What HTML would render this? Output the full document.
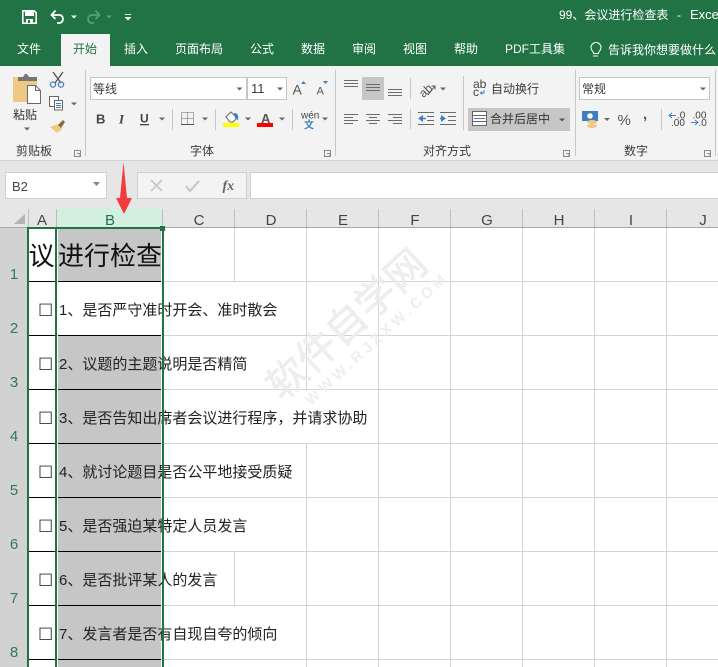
<!DOCTYPE html>
<html lang="zh"><head><meta charset="utf-8"><title>Excel</title>
<style>
html,body{margin:0;padding:0;background:#fff;width:718px;height:667px;overflow:hidden}
svg{display:block}
text{font-family:"Liberation Sans","Noto Sans CJK SC",sans-serif}
.t{font-size:12px;fill:#fff}
.r{font-size:12px;fill:#3a3a3a}
.c{font-size:15px;fill:#222}
.b{font-size:17px;fill:#333}
.ch{font-size:15px;fill:#444;text-anchor:middle}
.rn{font-size:15px;fill:#2f7a55;text-anchor:middle}
.a{fill:#666}
.l{stroke:#6a6a6a;stroke-width:1;fill:none}
.g{stroke:#d4d4d4;stroke-width:1;fill:none}
.s{stroke:#c8c8c8;stroke-width:1;fill:none}
</style></head><body>
<svg width="718" height="667" viewBox="0 0 718 667" xmlns="http://www.w3.org/2000/svg">
<!-- chrome backgrounds -->
<rect width="718" height="66" fill="#217346"/>
<rect x="0" y="66" width="718" height="94" fill="#f3f3f3"/>
<rect x="0" y="160" width="718" height="48" fill="#e6e6e6"/>
<rect x="0" y="160" width="718" height="1" fill="#d2d2d2"/>
<rect x="61" y="34" width="49" height="32" fill="#f3f3f3"/>

<!-- quick access -->
<path d="M22.800 10.800h11.400l2 2v10.400h-13.400z" fill="none" stroke="#fff" stroke-width="1.600"/>
<rect x="25" y="11" width="9" height="5" fill="#fff"/>
<rect x="26" y="19" width="7" height="5" fill="#fff"/><rect x="28" y="20" width="2" height="3" fill="#217346"/>
<path d="M52 15h8a4.200 4.200 0 0 1 0 8h-3M55.500 10.500l-4 4.500 4 4" fill="none" stroke="#fff" stroke-width="1.800"/>
<path d="M71 15.500h6l-3 3z" fill="#fff"/>
<path d="M99 15h-8a4.200 4.200 0 0 0 0 8h3M95.500 10.500l4 4.500-4 4" fill="none" stroke="#5d9a7b" stroke-width="1.800"/>
<path d="M106 15.500h6l-3 3z" fill="#5d9a7b"/>
<rect x="125" y="14" width="6" height="1" fill="#fff"/><path d="M124.500 17h7l-3.500 3.500z" fill="#fff"/>

<text class="t" x="559" y="19">99、会议进行检查表</text>
<text class="t" x="677" y="19">-</text>
<text class="t" x="690" y="19" style="font-size:13px">Excel</text>

<!-- tabs -->
<text class="t" x="17" y="53">文件</text>
<text class="t" x="73" y="53" style="fill:#217346">开始</text>
<text class="t" x="124" y="53">插入</text>
<text class="t" x="175" y="53">页面布局</text>
<text class="t" x="250" y="53">公式</text>
<text class="t" x="301" y="53">数据</text>
<text class="t" x="352" y="53">审阅</text>
<text class="t" x="403" y="53">视图</text>
<text class="t" x="454" y="53">帮助</text>
<text class="t" x="505" y="53">PDF工具集</text>
<path d="M593 56h5M593.500 53.500c0-2-2.500-3-2.500-6a5 5 0 0 1 10 0c0 3-2.500 4-2.500 6z" fill="none" stroke="#fff" stroke-width="1"/>
<text class="t" x="608" y="54">告诉我你想要做什么</text>

<!-- ribbon separators -->
<path class="s" d="M85.500 70v86M335.500 70v86M575.500 70v86M715.500 70v86"/>

<!-- clipboard -->
<path d="M13 77h24v25H13z" fill="#efc983"/>
<path d="M18 77h5l2-3h2l2 3h8v4H18z" fill="#757575"/>
<path d="M27.500 85.500h8l5 5v13h-13z" fill="#fff" stroke="#6a6a6a"/>
<path d="M35.500 85.500v5h5" fill="none" stroke="#6a6a6a"/>
<text class="r" x="13" y="119" style="fill:#333">粘贴</text>
<path class="a" d="M24 127.500h6l-3 3z"/>
<path d="M53 72l8 11M63 72l-8 11" stroke="#555" stroke-width="1.300" fill="none"/>
<circle cx="53" cy="84.500" r="2.600" fill="none" stroke="#3f7fbf" stroke-width="1.300"/>
<circle cx="61" cy="84.500" r="2.600" fill="none" stroke="#3f7fbf" stroke-width="1.300"/>
<path d="M49.500 96.500h9v10h-9z" fill="#fff" stroke="#666"/>
<path d="M54.500 100.500h8v9.500h-8z" fill="#fff" stroke="#666"/>
<path d="M56 103.500h5M56 105.500h5M56 107.500h5" stroke="#3f7fbf"/>
<path class="a" d="M71 102.500h6l-3 3z"/>
<path d="M50 127l8-3 4 5-5 4z" fill="#efc983"/><path d="M58 125l5-5 2 2-4 6z" fill="#8a6a3a"/>
<text class="r" x="16" y="155">剪贴板</text>
<path d="M74.500 150.500v6h6v-6zM77 153.500h3v3" fill="none" stroke="#8a8a8a"/>

<!-- font -->
<rect x="90.500" y="77.500" width="156" height="22" fill="#fff" stroke="#c6c6c6"/>
<rect x="247.500" y="77.500" width="39" height="22" fill="#fff" stroke="#c6c6c6"/>
<text class="r" x="93" y="93">等线</text>
<text class="r" x="251" y="93" style="font-size:13px">11</text>
<path class="a" d="M236.500 87.500h6l-3 3zM277 87.500h6l-3 3z"/>
<text x="292.500" y="94.500" style="font-size:14px;fill:#555">A</text>
<path d="M301 84l2.500-3 2.500 3z" fill="#3f7fbf"/>
<text x="316.500" y="94.500" style="font-size:11px;fill:#555">A</text>
<path d="M323 81h5l-2.500 3z" fill="#3f7fbf"/>
<text x="96" y="123.500" style="font-size:13px;font-weight:bold;fill:#444">B</text>
<text x="119" y="123.500" style="font-size:13px;font-style:italic;font-weight:bold;font-family:'Liberation Serif',serif;fill:#444">I</text>
<text x="140" y="122.500" style="font-size:12px;font-weight:bold;fill:#444">U</text>
<rect x="140" y="124" width="9" height="1.300" fill="#444"/>
<path class="a" d="M159 117.500h6l-3 3z"/>
<path class="s" d="M172.500 109v21"/>
<path d="M181.500 112.500h12v12h-12zM187.500 112.500v12M181.500 118.500h12" fill="none" stroke="#666" stroke-dasharray="1 1"/>
<path d="M181 124.500h13" stroke="#555"/>
<path class="a" d="M202 117.500h6l-3 3z"/>
<path class="s" d="M215.500 109v21"/>
<path d="M226 117l5-5 6 6-4 4h-3z" fill="#fff" stroke="#666"/>
<path d="M234 113c3 0 5 2 4 7l-3-2z" fill="#3f7fbf"/>
<rect x="223" y="123" width="16" height="4" fill="#ffff00"/>
<path class="a" d="M245 117.500h6l-3 3z"/>
<text x="261" y="123" style="font-size:13px;font-weight:bold;fill:#555">A</text>
<rect x="257" y="123" width="16" height="4" fill="#ff0000"/>
<path class="a" d="M279 117.500h6l-3 3z"/>
<path class="s" d="M292.500 109v21"/>
<text x="301" y="118.500" style="font-size:10px;fill:#444">wén</text>
<text x="304" y="128.500" style="font-size:10px;font-weight:bold;fill:#3f7fbf">文</text>
<path class="a" d="M322 117.500h6l-3 3z"/>
<text class="r" x="190" y="155">字体</text>
<path d="M324.500 150.500v6h6v-6zM327 153.500h3v3" fill="none" stroke="#8a8a8a"/>

<!-- alignment -->
<rect x="362" y="77" width="22" height="23" fill="#c6c6c6"/>
<path class="l" d="M344 80.500h14M344 83.500h14M344 86.500h14"/>
<path class="l" d="M366 84.500h14M366 87.500h14M366 90.500h14"/>
<path class="l" d="M388 89.500h14M388 92.500h14M388 95.500h14"/>
<path class="l" d="M344 114.500h14M344 117.500h9M344 120.500h14M344 123.500h9"/>
<path class="l" d="M366 114.500h14M369 117.500h8M366 120.500h14M369 123.500h8"/>
<path class="l" d="M388 114.500h14M393 117.500h9M388 120.500h14M393 123.500h9"/>
<path class="s" d="M410.500 78v21M410.500 109v20"/>
<text x="418" y="94" transform="rotate(-42 426 89)" style="font-size:12px;fill:#555">ab</text>
<path d="M428 95l7-9M431.500 86h3.500v3.500" stroke="#555" fill="none"/>
<path class="a" d="M440 87.500h6l-3 3z"/>
<path d="M418 118.500l5-3.500v7z" fill="#3f7fbf"/><path d="M421 118.500h5" stroke="#3f7fbf" stroke-width="1.500"/>
<path class="l" d="M418 112.500h16M427 116.500h7M427 120.500h7M418 124.500h16"/>
<path d="M446 118.500l-5-3.500v7z" fill="#3f7fbf"/><path d="M440 118.500h3" stroke="#3f7fbf" stroke-width="1.500"/>
<path class="l" d="M440 112.500h16M448 116.500h8M448 120.500h8M440 124.500h16"/>
<path class="s" d="M463.500 76v54"/>
<text x="473" y="88" style="font-size:12px;fill:#444">ab</text>
<text x="473" y="96" style="font-size:12px;fill:#444">c</text>
<path d="M484 90v3h-3M482 91.500l-1.500 1.500 1.500 1.500" stroke="#3f7fbf" fill="none"/>
<text class="r" x="491" y="93">自动换行</text>
<rect x="468" y="108" width="102" height="23" fill="#c6c6c6"/>
<rect x="472.500" y="111.500" width="14" height="14" fill="#fff" stroke="#666"/>
<path d="M472 115.500h15M472 121.500h15" stroke="#666"/>
<path d="M474 118.500h11" stroke="#3f7fbf"/>
<text class="r" x="490" y="123" style="fill:#333">合并后居中</text>
<path d="M559 118.500h6l-3 3z" fill="#555"/>
<text class="r" x="423" y="155">对齐方式</text>
<path d="M563.500 150.500v6h6v-6zM566 153.500h3v3" fill="none" stroke="#8a8a8a"/>

<!-- number -->
<rect x="579.500" y="77.500" width="130" height="22" fill="#fff" stroke="#c6c6c6"/>
<text class="r" x="582" y="93">常规</text>
<path class="a" d="M700 87.500h6l-3 3z"/>
<rect x="582" y="111" width="16" height="10" fill="#3f7fbf"/>
<circle cx="590" cy="116" r="2.800" fill="#fff"/>
<ellipse cx="592" cy="122" rx="5" ry="2" fill="#efc983"/><ellipse cx="592" cy="126" rx="5" ry="2" fill="#efc983"/>
<path class="a" d="M604 118h6l-3 3z"/>
<text x="617.500" y="125" style="font-size:15px;fill:#555">%</text>
<text x="643" y="119" style="font-size:15px;font-weight:bold;fill:#555">,</text>
<path class="s" d="M661.500 109v21"/>
<path d="M669 115.500h7M672 113l-3 2.500 3 2.500" stroke="#3f7fbf" fill="none"/>
<text x="677" y="118.500" style="font-size:10px;fill:#444">.0</text>
<text x="671" y="126" style="font-size:10px;fill:#444">.00</text>
<text x="692.500" y="118.500" style="font-size:10px;fill:#444">.00</text>
<path d="M691 122.500h7M695 120l3 2.500-3 2.500" stroke="#3f7fbf" fill="none"/>
<text x="698.500" y="126" style="font-size:10px;fill:#444">.0</text>
<text class="r" x="624" y="155">数字</text>
<path d="M704.500 150.500v6h6v-6zM707 153.500h3v3" fill="none" stroke="#8a8a8a"/>

<!-- formula bar -->
<rect x="5.500" y="172.500" width="101" height="26" fill="#fff" stroke="#cfcfcf"/>
<text x="12" y="191" style="font-size:13px;fill:#444">B2</text>
<path d="M93 182h7l-3.500 4z" fill="#888"/>
<rect x="137.500" y="172.500" width="109" height="26" fill="#f3f3f3" stroke="#cfcfcf"/>
<path d="M151 180l11 11M162 180l-11 11" stroke="#c8c8c8" stroke-width="1.800"/>
<path d="M186 186l4 5 9-10" stroke="#c8c8c8" stroke-width="2.200" fill="none"/>
<text x="222.500" y="190" style="font-size:14px;font-style:italic;font-weight:bold;font-family:'Liberation Serif',serif;fill:#666">fx</text>
<rect x="250.500" y="172.500" width="468" height="26" fill="#fff" stroke="#cfcfcf"/>

<!-- col headers -->
<rect x="0" y="208" width="718" height="19" fill="#e6e6e6"/>
<rect x="57" y="208" width="105" height="19" fill="#d2efdf"/>
<path d="M14 224l11-10v10z" fill="#b4b4b4"/>
<path d="M28.500 209v18M56.500 209v18M162.500 209v18M234.500 209v18M306.500 209v18M378.500 209v18M450.500 209v18M522.500 209v18M594.500 209v18M666.500 209v18" stroke="#bdbdbd"/>
<text class="ch" x="42" y="225">A</text>
<text class="ch" x="110" y="225" style="fill:#217346">B</text>
<text class="ch" x="199" y="225">C</text>
<text class="ch" x="271" y="225">D</text>
<text class="ch" x="343" y="225">E</text>
<text class="ch" x="415" y="225">F</text>
<text class="ch" x="487" y="225">G</text>
<text class="ch" x="559" y="225">H</text>
<text class="ch" x="631" y="225">I</text>
<text class="ch" x="703" y="225">J</text>
<rect x="0" y="227" width="718" height="1" fill="#a8a8a8"/>

<!-- row headers -->
<rect x="0" y="228" width="27" height="439" fill="#d2d2d2"/>
<text class="rn" x="14" y="279">1</text>
<text class="rn" x="14" y="333">2</text>
<text class="rn" x="14" y="387">3</text>
<text class="rn" x="14" y="441">4</text>
<text class="rn" x="14" y="495">5</text>
<text class="rn" x="14" y="549">6</text>
<text class="rn" x="14" y="603">7</text>
<text class="rn" x="14" y="657">8</text>

<!-- gridlines -->
<path class="g" d="M163 281.500h555M163 335.500h555M163 389.500h555M163 443.500h555M163 497.500h555M163 551.500h555M163 605.500h555M163 659.500h555"/>
<path class="g" d="M234.500 228v53M234.500 552v53"/>
<path class="g" d="M306.500 228v161M306.500 444v223"/>
<path class="g" d="M378.500 228v439M450.500 228v439M522.500 228v439M594.500 228v439M666.500 228v439"/>

<!-- selection fill -->
<rect x="57" y="229" width="105" height="438" fill="#fff"/>
<rect x="58" y="229" width="103" height="438" fill="#c6c6c6"/>
<rect x="58" y="282" width="103" height="53" fill="#fff"/>
<path d="M29 281.500h26M29 335.500h26M29 389.500h26M29 443.500h26M29 497.500h26M29 551.500h26M29 605.500h26M29 659.500h26" stroke="#000"/>
<path d="M58 281.500h103M58 335.500h103M58 389.500h103M58 443.500h103M58 497.500h103M58 551.500h103M58 605.500h103M58 659.500h103" stroke="#000"/>

<!-- cell content -->
<text x="28.500" y="265" style="font-size:26px;fill:#111">议</text>
<text x="58" y="265" style="font-size:26px;fill:#111">进行检查</text>
<text class="b" x="38" y="316">☐</text>
<text class="b" x="38" y="370">☐</text>
<text class="b" x="38" y="424">☐</text>
<text class="b" x="38" y="478">☐</text>
<text class="b" x="38" y="532">☐</text>
<text class="b" x="38" y="586">☐</text>
<text class="b" x="38" y="640">☐</text>
<text class="c" x="59" y="315">1、是否严守准时开会、准时散会</text>
<text class="c" x="59" y="369">2、议题的主题说明是否精简</text>
<text class="c" x="59" y="423">3、是否告知出席者会议进行程序，并请求协助</text>
<text class="c" x="59" y="477">4、就讨论题目是否公平地接受质疑</text>
<text class="c" x="59" y="531">5、是否强迫某特定人员发言</text>
<text class="c" x="59" y="585">6、是否批评某人的发言</text>
<text class="c" x="59" y="639">7、发言者是否有自现自夸的倾向</text>

<!-- watermark over text -->
<g transform="rotate(-42.500 347 328)" fill="#ebebeb" fill-opacity=".85">
<text x="349" y="339" text-anchor="middle" style="font-size:40px;font-family:'Noto Sans CJK SC',sans-serif;stroke:#ebebeb;stroke-width:.6">软件自学网</text>
<text x="362" y="361" text-anchor="middle" style="font-size:15px;font-weight:bold;letter-spacing:4px">WWW.RJZXW.COM</text>
</g>

<!-- selection borders -->
<rect x="27" y="227" width="2" height="440" fill="#217346"/>
<rect x="55" y="227" width="2" height="440" fill="#217346"/>
<rect x="162" y="227" width="2" height="440" fill="#217346"/>
<rect x="27" y="227" width="137" height="2" fill="#217346"/>
<rect x="160" y="226" width="5" height="5" fill="#217346"/>

<!-- red arrow -->
<path d="M123.500 162L127 198H132L124 214L116 198H120Z" fill="#f43c3c"/>
</svg>
</body></html>
